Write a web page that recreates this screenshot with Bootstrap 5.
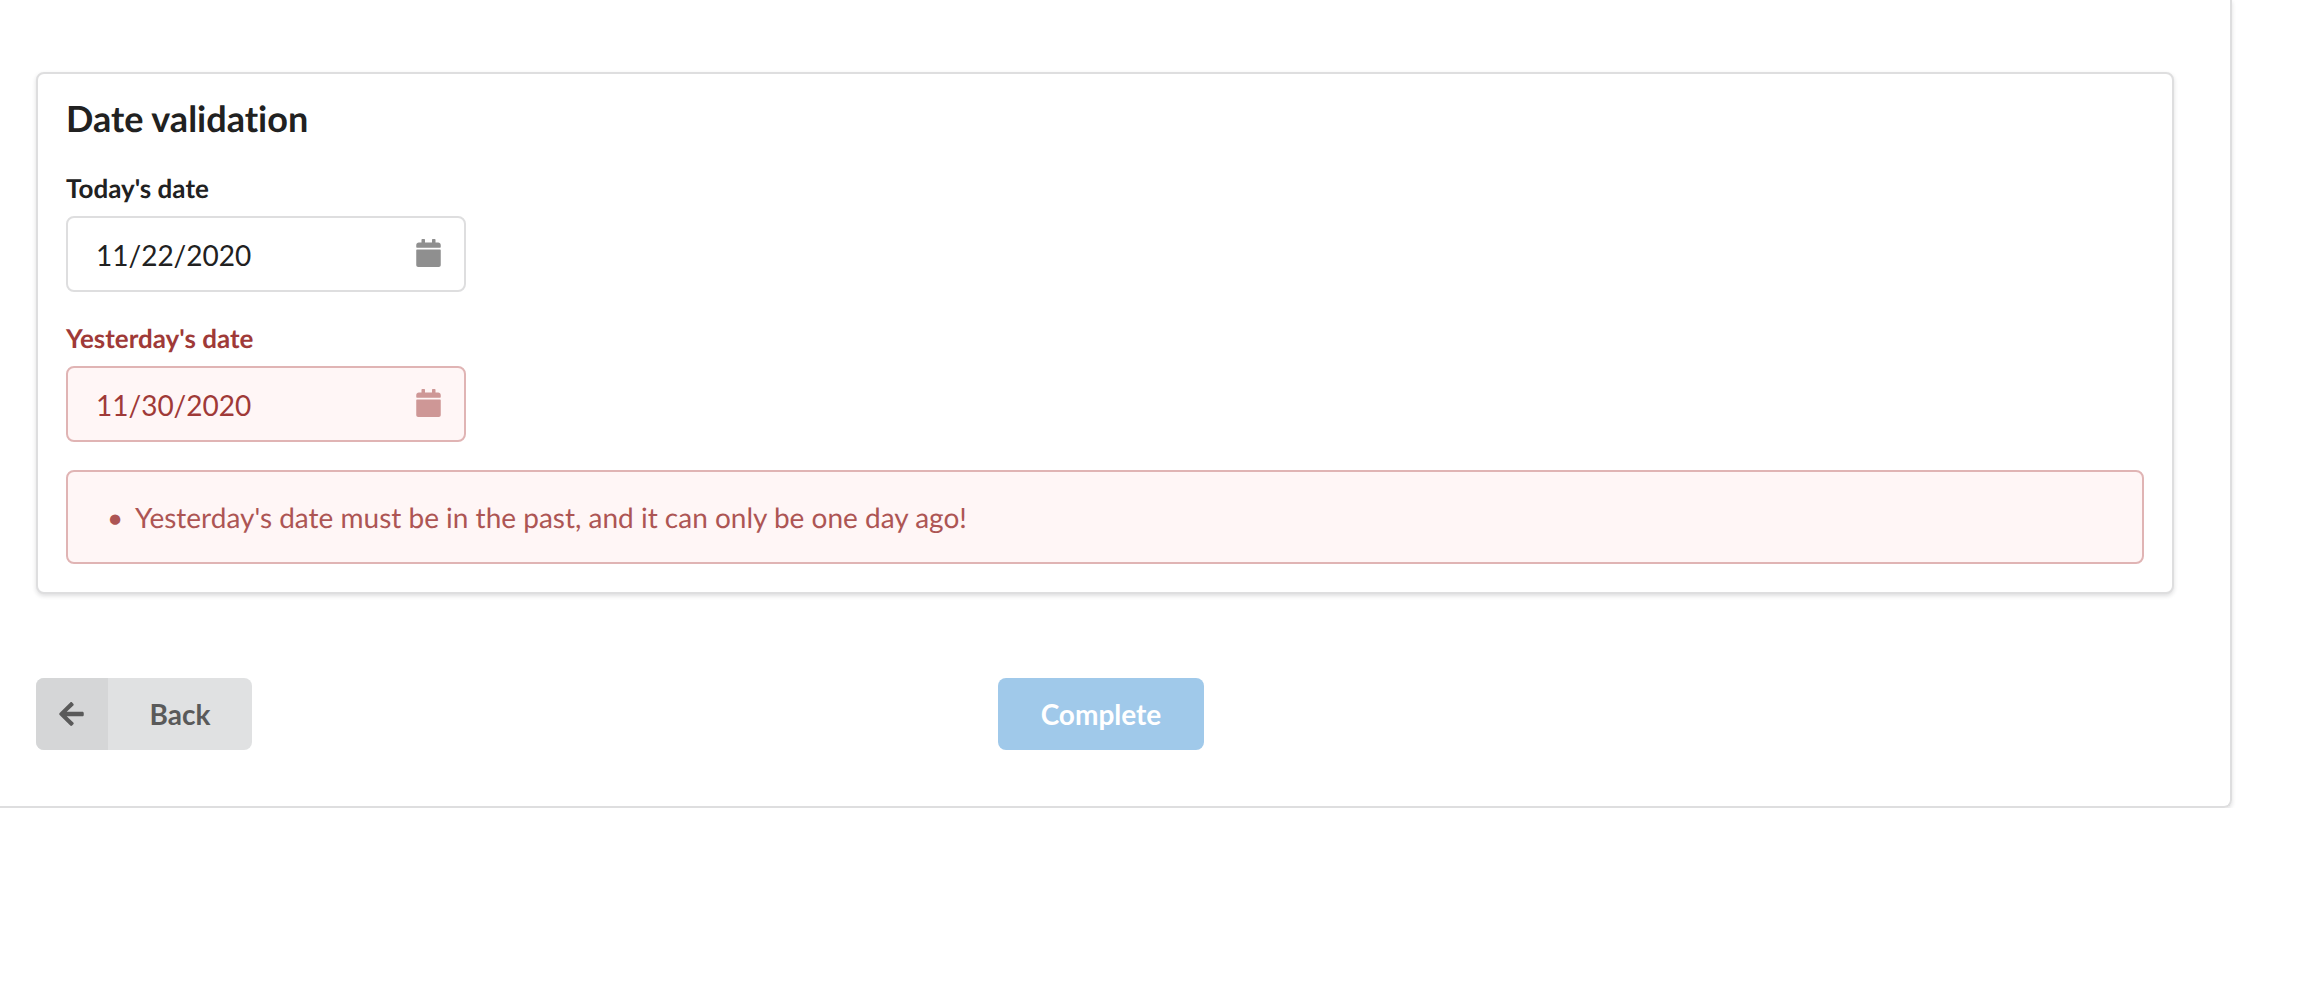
<!DOCTYPE html>
<html lang="en">
<head>
<meta charset="utf-8">
<meta name="viewport" content="width=device-width, initial-scale=1">
<title>Date validation</title>
<link rel="stylesheet" href="https://cdn.jsdelivr.net/npm/bootstrap@5.3.0/dist/css/bootstrap.min.css">
<style>
  :root { --line: #dededf; --ink: #212121; --err: #9f3a38; --err-bg: #fff6f6; --err-line: #e0b4b4; }
  body { font-family: Lato, "Liberation Sans", sans-serif; font-size: 28px; line-height: 36px; color: var(--ink); background: #fff; overflow-x: hidden; font-variant-ligatures: none; text-rendering: geometricPrecision; }
  .wizard { margin: 0 70px 0 -22px; padding: 72px 56px 56px; border: 2px solid var(--line); border-top: 0; border-radius: 0 0 8px 8px; box-shadow: 0 2px 4px rgba(34,36,38,.15); }
  .section-card { --bs-card-border-color: var(--line); --bs-card-border-width: 2px; --bs-card-border-radius: 8px; --bs-card-color: var(--ink); box-shadow: 0 2px 4px rgba(34,36,38,.15); margin-bottom: 84px; }
  .section-card > .card-body { padding: 28px; }
  .section-title { font-size: 36px; line-height: 32px; font-weight: 700; margin-bottom: 38px; }
  .field { margin-bottom: 30px; }
  .field.is-wrong { margin-bottom: 28px; }
  .field .form-label { display: block; font-size: 26px; line-height: 32px; font-weight: 700; margin-bottom: 12px; }
  .date-box { width: 400px; max-width: 100%; }
  .date-box .form-control { height: 76px; padding: 2px 72px 0 28px; font-size: 28px; line-height: 36px; color: var(--ink); border: 2px solid var(--line); border-radius: 8px; }
  .date-box svg { position: absolute; top: 23px; right: 25px; opacity: .5; pointer-events: none; }
  .is-wrong { color: var(--err); }
  .is-wrong .form-control { color: var(--err); background: var(--err-bg); border-color: var(--err-line); }
  .problem-box { --bs-alert-color: var(--err); --bs-alert-bg: var(--err-bg); --bs-alert-border-color: var(--err-line); border-width: 2px; border-radius: 8px; padding: 27px 39px; margin: 0; }
  .problem-box li { opacity: .85; }
  .problem-box li::before { content: "•"; flex: 0 0 28px; }
  .btn-step { height: 72px; padding: 0; border: 0; border-radius: 8px; overflow: hidden; font-size: 28px; line-height: 36px; font-weight: 700; }
  .btn-back, .btn-back:hover { background: #e0e1e2; color: #5a5a5a; }
  .btn-back .arrow-cell { width: 72px; height: 72px; padding-right: 2px; background: #d5d6d7; }
  .btn-back span { width: 144px; }
  .btn-complete, .btn-complete:disabled { width: 206px; background: #a0c9ea; color: #fff; opacity: 1; margin-right: 8px; }
</style>
<script src="https://cdn.jsdelivr.net/npm/bootstrap@5.3.0/dist/js/bootstrap.bundle.min.js"></script>
</head>
<body>
<svg class="d-none" aria-hidden="true">
  <symbol id="calendar" viewBox="0 0 448 512"><path fill="currentColor" d="M12 192h424c6.600 0 12 5.400 12 12v272c0 20-16 36-36 36H36c-20 0-36-16-36-36V204c0-6.600 5.400-12 12-12zm436-44v-36c0-26.500-21.500-48-48-48h-48V12c0-6.600-5.400-12-12-12h-40c-6.600 0-12 5.400-12 12v52H160V12c0-6.600-5.400-12-12-12h-40c-6.600 0-12 5.400-12 12v52H48C21.500 64 0 85.500 0 112v36c0 6.600 5.400 12 12 12h424c6.600 0 12-5.400 12-12z"/></symbol>
</svg>
<main class="wizard">
  <form>
    <section class="card section-card">
      <div class="card-body">
        <h1 class="section-title">Date validation</h1>
        <div class="field">
          <label class="form-label" for="today">Today's date</label>
          <div class="date-box position-relative">
            <input class="form-control" type="text" id="today" value="11/22/2020">
            <svg width="25" height="28" aria-hidden="true"><use href="#calendar"/></svg>
          </div>
        </div>
        <div class="field is-wrong">
          <label class="form-label" for="yesterday">Yesterday's date</label>
          <div class="date-box position-relative">
            <input class="form-control" type="text" id="yesterday" value="11/30/2020" aria-invalid="true" aria-describedby="problems">
            <svg width="25" height="28" aria-hidden="true"><use href="#calendar"/></svg>
          </div>
        </div>
        <div class="alert problem-box" id="problems" role="alert">
          <ul class="list-unstyled mb-0">
            <li class="d-flex">Yesterday's date must be in the past, and it can only be one day ago!</li>
          </ul>
        </div>
      </div>
    </section>
    <div class="row">
      <div class="col-4">
        <button type="button" class="btn btn-step btn-back d-inline-flex align-items-center">
          <i class="arrow-cell d-flex align-items-center justify-content-center"><svg width="25" height="28" viewBox="0 0 448 512" aria-hidden="true"><path fill="currentColor" d="M257.500 445.100l-22.200 22.200c-9.400 9.400-24.600 9.400-33.900 0L7 273c-9.400-9.400-9.400-24.600 0-33.900L201.400 44.700c9.400-9.400 24.600-9.400 33.900 0l22.200 22.200c9.500 9.500 9.300 25-.4 34.300L136.600 216H424c13.300 0 24 10.700 24 24v32c0 13.300-10.700 24-24 24H136.600l120.500 114.800c9.800 9.300 10 24.800.4 34.300z"/></svg></i>
          <span>Back</span>
        </button>
      </div>
      <div class="col-4 d-flex justify-content-center">
        <button type="submit" class="btn btn-step btn-complete" disabled><span>Complete</span></button>
      </div>
    </div>
  </form>
</main>
</body>
</html>
